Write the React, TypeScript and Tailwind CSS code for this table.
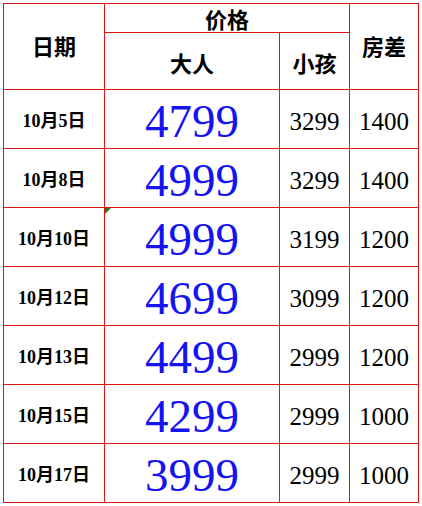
import React from 'react';

// ── Price table (10月 departures) ─────────────────────────────────────────────
const rows = [
  { date: '10月5日', adult: '4799', child: '3299', room: '1400' },
  { date: '10月8日', adult: '4999', child: '3299', room: '1400' },
  { date: '10月10日', adult: '4999', child: '3199', room: '1200', flag: true },
  { date: '10月12日', adult: '4699', child: '3099', room: '1200' },
  { date: '10月13日', adult: '4499', child: '2999', room: '1200' },
  { date: '10月15日', adult: '4299', child: '2999', room: '1000' },
  { date: '10月17日', adult: '3999', child: '2999', room: '1000' },
];

const cjk = "font-['Liberation_Serif','Noto_Sans_CJK_SC',serif]";
const cell = 'bg-white flex items-center justify-center leading-none';

export default function App() {
  return (
    <div className="w-[422px] h-[506px] bg-white pt-[3px] pl-[3px] overflow-hidden">
      <div className="grid grid-cols-[100px_174px_69px_68px] grid-rows-[28px_56px_repeat(7,58px)] gap-px p-px bg-[#e01414] w-fit">
        {/* header */}
        <div className={`${cell} ${cjk} row-span-2 text-[22px] font-bold text-black pt-[2px]`}>日期</div>
        <div className={`${cell} ${cjk} col-span-2 text-[22px] font-bold text-black pt-[5px]`}>价格</div>
        <div className={`${cell} ${cjk} row-span-2 text-[22px] font-bold text-black pt-[3px]`}>房差</div>
        <div className={`${cell} ${cjk} text-[22px] font-bold text-black pt-[7px]`}>大人</div>
        <div className={`${cell} ${cjk} text-[22px] font-bold text-black pt-[7px]`}>小孩</div>

        {/* body */}
        {rows.map(r => (
          <React.Fragment key={r.date}>
            <div className={`${cell} ${cjk} text-[18px] font-bold text-black pt-[4px]`}>{r.date}</div>
            <div className={`${cell} relative font-['Liberation_Serif',serif] text-[47px] text-[#1414f0] pt-[5px]`}>
              {r.flag && (
                <span className="absolute left-0 top-0 w-0 h-0 border-t-[6px] border-t-[#1f7a1f] border-r-[6px] border-r-transparent" />
              )}
              {r.adult}
            </div>
            <div className={`${cell} font-['Liberation_Serif',serif] text-[25px] text-black pt-[5px]`}>{r.child}</div>
            <div className={`${cell} font-['Liberation_Serif',serif] text-[25px] text-black pt-[5px]`}>{r.room}</div>
          </React.Fragment>
        ))}
      </div>
    </div>
  );
}
